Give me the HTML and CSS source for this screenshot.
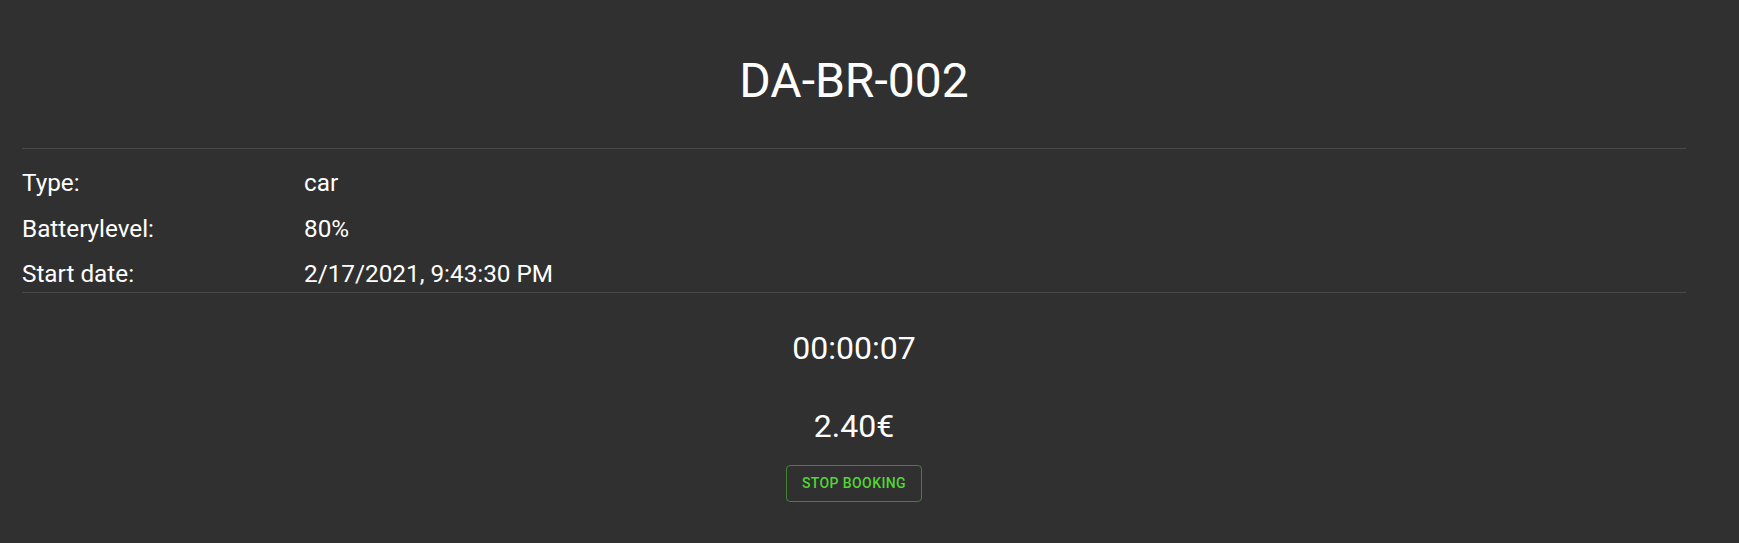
FILE: index.html
```html
<!DOCTYPE html>
<html lang="en">
<head>
<meta charset="utf-8">
<title>DA-BR-002</title>
<link rel="stylesheet" href="styles.css">
</head>
<body>
<main class="page">
  <header class="header">
    <h1 class="title">DA-BR-002</h1>
  </header>
  <section class="details">
    <div class="row"><span class="label">Type:</span><span class="value">car</span></div>
    <div class="row"><span class="label">Batterylevel:</span><span class="value">80%</span></div>
    <div class="row"><span class="label">Start date:</span><span class="value">2/17/2021, 9:43:30 PM</span></div>
  </section>
  <section class="summary">
    <div class="timer">00:00:07</div>
    <div class="price">2.40€</div>
    <button class="stop-btn" type="button">Stop Booking</button>
  </section>
</main>
</body>
</html>
```
FILE: styles.css
```css
html, body {
  margin: 0;
  padding: 0;
  background: #303030;
}
body {
  font-family: Roboto, "Liberation Sans", sans-serif;
  color: #ffffff;
}
.page {
  margin: 0 53px 0 22px;
}
.header {
  padding-top: 53px;
  padding-bottom: 40px;
  border-bottom: 1px solid rgba(255, 255, 255, 0.12);
}
.title {
  margin: 0;
  text-align: center;
  font-size: 48px;
  font-weight: 400;
  line-height: 55px;
}
.details {
  display: flex;
  flex-direction: column;
  gap: 13.5px;
  padding-top: 18px;
  padding-bottom: 2px;
  border-bottom: 1px solid rgba(255, 255, 255, 0.12);
}
.row {
  display: grid;
  grid-template-columns: 282px 1fr;
  font-size: 24.3px;
  line-height: 32px;
}
.summary {
  display: flex;
  flex-direction: column;
  align-items: center;
  padding-top: 36px;
}
.timer, .price {
  font-size: 32px;
  line-height: 39.5px;
}
.price {
  margin-top: 38px;
}
.stop-btn {
  margin-top: 19px;
  font-family: Roboto, "Liberation Sans", sans-serif;
  font-size: 14px;
  font-weight: 500;
  line-height: 24.5px;
  letter-spacing: 0.4px;
  text-transform: uppercase;
  color: #52d634;
  background: transparent;
  border: 1px solid rgba(82, 214, 52, 0.5);
  border-radius: 4px;
  padding: 5px 15px;
  cursor: pointer;
}
```
